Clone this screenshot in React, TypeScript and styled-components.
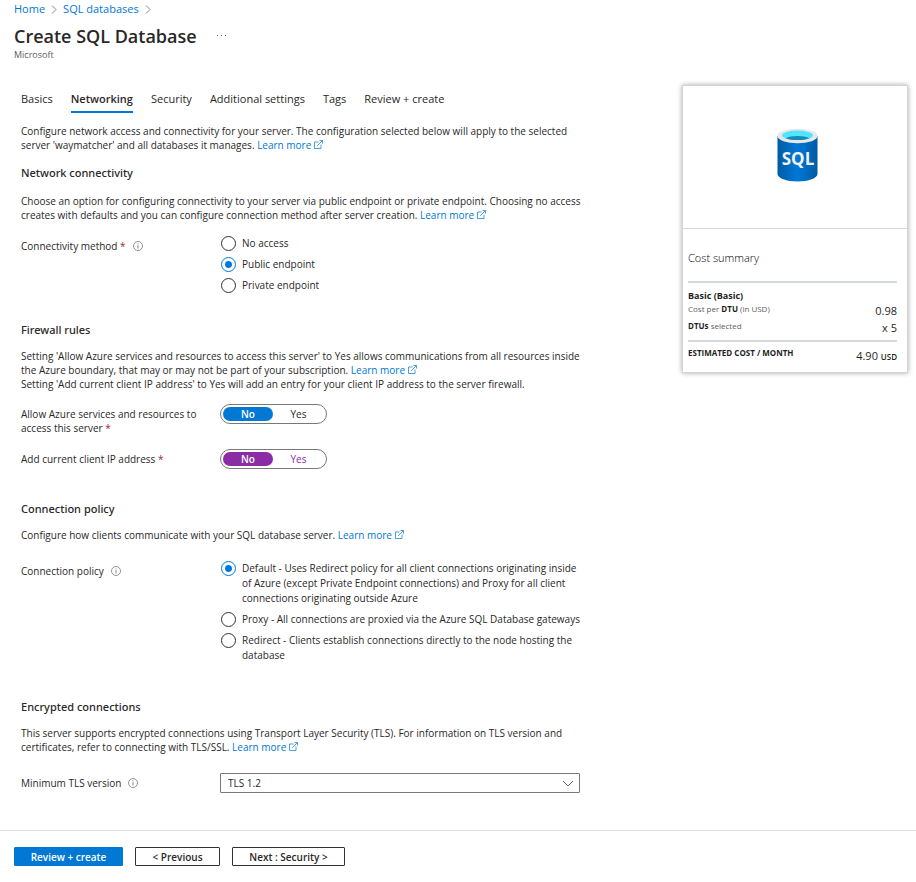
import React, { useState } from "react";
import styled, { createGlobalStyle, css } from "styled-components";

const BLUE = "#0078d4";
const TEXT = "#292827";

const GlobalStyle = createGlobalStyle`
  *, *::before, *::after { box-sizing: border-box; }
  body {
    margin: 0;
    background: #fff;
    color: ${TEXT};
    font-family: "Open Sans", "Noto Sans", sans-serif;
    font-size: 10px;
    line-height: 14px;
  }
  button, select, input { font: inherit; color: inherit; }
`;

const Page = styled.div`
  display: flex;
  flex-direction: column;
`;

const Header = styled.header`
  padding: 1px 14px 0;
`;

const Breadcrumb = styled.nav`
  display: flex;
  align-items: center;
  gap: 6px;
  height: 16px;
  font-size: 11px;
`;

const Link = styled.a`
  color: ${BLUE};
  text-decoration: none;
  white-space: nowrap;
`;

const TitleRow = styled.div`
  display: flex;
  align-items: center;
  gap: 20px;
  height: 24px;
  margin-top: 7px;
`;

const Title = styled.h1`
  margin: 0;
  font-size: 18px;
  line-height: 24px;
  font-weight: 600;
`;

const MoreButton = styled.button`
  display: flex;
  padding: 0;
  border: 0;
  background: none;
`;

const Publisher = styled.div`
  font-size: 9px;
  color: #605e5c;
`;

const Content = styled.main`
  display: flex;
  align-items: flex-start;
  justify-content: space-between;
  gap: 32px;
  padding: 22px 8px 37px 21px;
`;

const Form = styled.form`
  flex: 0 1 580px;
  padding-top: 8px;
`;

const Tabs = styled.div`
  display: flex;
  gap: 18px;
  margin-bottom: 11px;
`;

const Tab = styled.button<{ $active?: boolean }>`
  height: 21px;
  padding: 0 0 6px;
  border: 0;
  border-bottom: 2px solid ${(p) => (p.$active ? BLUE : "transparent")};
  background: none;
  font-size: 11px;
  line-height: 14px;
  white-space: nowrap;
  font-weight: ${(p) => (p.$active ? 600 : 400)};
`;

const Section = styled.section<{ $top?: number }>`
  margin-top: ${(p) => p.$top ?? 0}px;
`;

const Heading = styled.h2<{ $gap?: number }>`
  margin: 0 0 ${(p) => p.$gap ?? 11}px;
  font-family: "Noto Sans", sans-serif;
  font-size: 11px;
  line-height: 16px;
  font-weight: 500;
`;

const Paragraph = styled.p`
  margin: 0;
  white-space: nowrap;
`;

const Intro = styled(Paragraph)`
  margin-bottom: 13px;
`;

const Field = styled.div<{ $top: number }>`
  display: grid;
  grid-template-columns: 199px 360px;
  margin-top: ${(p) => p.$top}px;
`;

const FieldLabel = styled.label`
  padding-top: 3px;
  padding-right: 20px;
`;

const Required = styled.span`
  color: #a4262c;
`;

const InfoSvg = styled.svg`
  display: inline-block;
  margin-left: 7px;
  vertical-align: -1px;
`;

const LinkSvg = styled.svg`
  margin-left: 3px;
  vertical-align: 0;
`;

const Options = styled.div`
  display: flex;
  flex-direction: column;
  gap: 6px;
`;

const Option = styled.label`
  display: flex;
  align-items: flex-start;
  gap: 6px;
  line-height: 15px;
  white-space: nowrap;
`;

const Radio = styled.input`
  appearance: none;
  flex: none;
  width: 15px;
  height: 15px;
  margin: 0 0 0 1px;
  border: 1px solid #323130;
  border-radius: 50%;
  background: #fff;
  &:checked {
    border-color: ${BLUE};
    background: radial-gradient(circle, ${BLUE} 3px, #fff 4px);
  }
`;

const Switch = styled.div`
  display: grid;
  grid-template-columns: 50px 1fr;
  width: 107px;
  height: 20px;
  padding: 2px;
  border: 1px solid #7a7876;
  border-radius: 10px;
`;

const SwitchButton = styled.button<{ $tone: string; $on: boolean }>`
  padding: 0;
  border: 0;
  border-radius: 8px;
  background: none;
  line-height: 14px;
  color: ${(p) => (p.$tone === BLUE ? TEXT : p.$tone)};
  ${(p) =>
    p.$on &&
    css`
      background: ${p.$tone};
      color: #fff;
      font-weight: 600;
    `}
`;

const SelectBox = styled.div`
  display: grid;
  align-items: center;
  & > * {
    grid-area: 1 / 1;
  }
  & > svg {
    justify-self: end;
    margin-right: 6px;
    pointer-events: none;
  }
`;

const Select = styled.select`
  appearance: none;
  width: 100%;
  height: 20px;
  padding: 0 7px;
  border: 1px solid #7a7876;
  border-radius: 1px;
  background: #fff;
`;

const Card = styled.aside`
  flex: 0 0 226px;
  margin-top: 1px;
  border: 1px solid #d2d4d6;
  box-shadow: 0 0 5px rgba(0, 0, 0, 0.35);
  color: #1f1f1f;
`;

const CardLogo = styled.div`
  display: flex;
  justify-content: center;
  padding: 42px 0 46px 4px;
  border-bottom: 1px solid #d6d9dc;
`;

const CardBody = styled.div`
  padding: 20px 10px 4px 5px;
`;

const CardTitle = styled.h2`
  margin: 0 0 14px;
  font-size: 11px;
  line-height: 18px;
  font-weight: 300;
  color: #000;
`;

const CostBlock = styled.div`
  border-top: 2px solid #d6dade;
  padding: 6px 0 3px;
`;

const CostRow = styled.div`
  display: flex;
  justify-content: space-between;
  align-items: flex-start;
  height: 17px;
  font-size: 8px;
  line-height: 12px;
  color: #605e5c;
  & b {
    font-weight: 700;
    color: #1f1f1f;
  }
`;

const TotalRow = styled(CostRow)`
  line-height: 10px;
`;

const Plan = styled.div`
  font-size: 9px;
  line-height: 14px;
  font-weight: 700;
`;

const Amount = styled.span`
  font-size: 11px;
  line-height: 16px;
  color: #1f1f1f;
`;

const Currency = styled.span`
  font-size: 8px;
  font-weight: 600;
`;

const Footer = styled.footer`
  display: flex;
  gap: 12px;
  padding: 16px 14px;
  border-top: 1px solid #dcdcdc;
`;

const Button = styled.button<{ $primary?: boolean; $width: number }>`
  min-width: ${(p) => p.$width}px;
  height: 19px;
  padding: 0 8px;
  border: 1px solid ${(p) => (p.$primary ? BLUE : "#323130")};
  border-radius: 1px;
  background: ${(p) => (p.$primary ? BLUE : "#fff")};
  color: ${(p) => (p.$primary ? "#fff" : TEXT)};
  font-weight: 600;
  line-height: 14px;
  white-space: nowrap;
`;

const Crumb = () => (
  <svg width="6" height="9" viewBox="0 0 6 9" fill="none" stroke="#8a8886" aria-hidden="true">
    <path d="M1 .5 5 4.5 1 8.5" />
  </svg>
);

const Info = () => (
  <InfoSvg width="10" height="10" viewBox="0 0 10 10" fill="none" stroke="#7a7876" aria-hidden="true">
    <circle cx="5" cy="5" r="4.5" strokeWidth=".8" />
    <path d="M5 4.2V7.5M5 2.4V3.3" strokeWidth=".9" />
  </InfoSvg>
);

const LearnMore = () => (
  <Link href="#">
    Learn more
    <LinkSvg width="9" height="9" viewBox="0 0 9 9" fill="none" stroke={BLUE} strokeWidth=".7" aria-hidden="true">
      <path d="M4.5 2H.5V8.5H7V4.5M3.2 5.8 8.3.7M5.5.5H8.5V3.5" />
    </LinkSvg>
  </Link>
);

const SqlLogo = () => (
  <svg width="41" height="54" viewBox="0 0 41 54" role="img" aria-label="SQL database">
    <defs>
      <linearGradient id="body" x1="0" x2="1" y1="0" y2="0">
        <stop offset="0" stopColor="#005ba1" />
        <stop offset=".2" stopColor="#0067b8" />
        <stop offset=".5" stopColor="#0078d7" />
        <stop offset=".8" stopColor="#0067b8" />
        <stop offset="1" stopColor="#005ba1" />
      </linearGradient>
    </defs>
    <path d="M.5 8V46C.5 50 9.5 53.5 20.5 53.5S40.5 50 40.5 46V8Z" fill="url(#body)" />
    <ellipse cx="20.5" cy="8" rx="20" ry="7.3" fill="#e8e8e8" />
    <ellipse cx="20.5" cy="7.3" rx="15.5" ry="4.8" fill="#50e6ff" />
    <path d="M8.5 10.2C11.5 8.6 15.5 7.9 20.5 7.9S29.5 8.6 32.5 10.2C29.5 11.5 25.5 12.1 20.5 12.1S11.5 11.5 8.5 10.2Z" fill="#198ab3" />
    <text x="21" y="37" textAnchor="middle" fontFamily="Open Sans, sans-serif" fontSize="17" fontWeight="700" fill="#f2f2f2">
      SQL
    </text>
  </svg>
);

const TAB_NAMES = ["Basics", "Networking", "Security", "Additional settings", "Tags", "Review + create"];

function Toggle({ tone, label }: { tone: string; label: string }) {
  const [yes, setYes] = useState(false);
  return (
    <Switch role="group" aria-label={label}>
      <SwitchButton type="button" $tone={tone} $on={!yes} aria-pressed={!yes} onClick={() => setYes(false)}>
        No
      </SwitchButton>
      <SwitchButton type="button" $tone={tone} $on={yes} aria-pressed={yes} onClick={() => setYes(true)}>
        Yes
      </SwitchButton>
    </Switch>
  );
}

export default function App() {
  return (
    <Page>
      <GlobalStyle />
      <Header>
        <Breadcrumb aria-label="Breadcrumb">
          <Link href="#">Home</Link>
          <Crumb />
          <Link href="#">SQL databases</Link>
          <Crumb />
        </Breadcrumb>
        <TitleRow>
          <Title>Create SQL Database</Title>
          <MoreButton aria-label="More actions">
            <svg width="10" height="2" viewBox="0 0 10 2" fill="#605e5c">
              <path d="M0 0h1v1H0zM4 0h1v1H4zM8 0h1v1H8z" />
            </svg>
          </MoreButton>
        </TitleRow>
        <Publisher>Microsoft</Publisher>
      </Header>

      <Content>
        <Form>
          <Tabs role="tablist">
            {TAB_NAMES.map((name) => (
              <Tab key={name} type="button" role="tab" aria-selected={name === "Networking"} $active={name === "Networking"}>
                {name}
              </Tab>
            ))}
          </Tabs>

          <Intro>
            Configure network access and connectivity for your server. The configuration selected below will apply to the selected
            <br />
            server 'waymatcher' and all databases it manages. <LearnMore />
          </Intro>

          <Section>
            <Heading $gap={13}>Network connectivity</Heading>
            <Paragraph>
              Choose an option for configuring connectivity to your server via public endpoint or private endpoint. Choosing no access
              <br />
              creates with defaults and you can configure connection method after server creation. <LearnMore />
            </Paragraph>
            <Field $top={14}>
              <FieldLabel as="div" id="method">
                Connectivity method <Required>*</Required>
                <Info />
              </FieldLabel>
              <Options role="radiogroup" aria-labelledby="method">
                <Option>
                  <Radio type="radio" name="method" />
                  No access
                </Option>
                <Option>
                  <Radio type="radio" name="method" defaultChecked />
                  Public endpoint
                </Option>
                <Option>
                  <Radio type="radio" name="method" />
                  Private endpoint
                </Option>
              </Options>
            </Field>
          </Section>

          <Section $top={29}>
            <Heading>Firewall rules</Heading>
            <Paragraph>
              Setting 'Allow Azure services and resources to access this server' to Yes allows communications from all resources inside
              <br />
              the Azure boundary, that may or may not be part of your subscription. <LearnMore />
              <br />
              Setting 'Add current client IP address' to Yes will add an entry for your client IP address to the server firewall.
            </Paragraph>
            <Field $top={13}>
              <FieldLabel as="div">
                Allow Azure services and resources to access this server <Required>*</Required>
              </FieldLabel>
              <Toggle tone={BLUE} label="Allow Azure services and resources to access this server" />
            </Field>
            <Field $top={14}>
              <FieldLabel as="div">
                Add current client IP address <Required>*</Required>
              </FieldLabel>
              <Toggle tone="#8a2da5" label="Add current client IP address" />
            </Field>
          </Section>

          <Section $top={32}>
            <Heading>Connection policy</Heading>
            <Paragraph>
              Configure how clients communicate with your SQL database server. <LearnMore />
            </Paragraph>
            <Field $top={19}>
              <FieldLabel as="div" id="policy">
                Connection policy
                <Info />
              </FieldLabel>
              <Options role="radiogroup" aria-labelledby="policy">
                <Option>
                  <Radio type="radio" name="policy" defaultChecked />
                  <span>
                    Default - Uses Redirect policy for all client connections originating inside
                    <br />
                    of Azure (except Private Endpoint connections) and Proxy for all client
                    <br />
                    connections originating outside Azure
                  </span>
                </Option>
                <Option>
                  <Radio type="radio" name="policy" />
                  Proxy - All connections are proxied via the Azure SQL Database gateways
                </Option>
                <Option>
                  <Radio type="radio" name="policy" />
                  <span>
                    Redirect - Clients establish connections directly to the node hosting the
                    <br />
                    database
                  </span>
                </Option>
              </Options>
            </Field>
          </Section>

          <Section $top={36}>
            <Heading>Encrypted connections</Heading>
            <Paragraph>
              This server supports encrypted connections using Transport Layer Security (TLS). For information on TLS version and
              <br />
              certificates, refer to connecting with TLS/SSL. <LearnMore />
            </Paragraph>
            <Field $top={19}>
              <FieldLabel htmlFor="tls">
                Minimum TLS version
                <Info />
              </FieldLabel>
              <SelectBox>
                <Select id="tls" defaultValue="1.2">
                  <option value="1.0">TLS 1.0</option>
                  <option value="1.1">TLS 1.1</option>
                  <option value="1.2">TLS 1.2</option>
                </Select>
                <svg width="12" height="7" viewBox="0 0 12 7" fill="none" stroke="#605e5c" aria-hidden="true">
                  <path d="M1 1 6 6 11 1" />
                </svg>
              </SelectBox>
            </Field>
          </Section>
        </Form>

        <Card>
          <CardLogo>
            <SqlLogo />
          </CardLogo>
          <CardBody>
            <CardTitle>Cost summary</CardTitle>
            <CostBlock>
              <Plan>Basic (Basic)</Plan>
              <CostRow>
                <span>
                  Cost per <b>DTU</b> (in USD)
                </span>
                <Amount>0.98</Amount>
              </CostRow>
              <CostRow>
                <span>
                  <b>DTUs</b> selected
                </span>
                <Amount>x 5</Amount>
              </CostRow>
            </CostBlock>
            <CostBlock>
              <TotalRow>
                <b>ESTIMATED COST / MONTH</b>
                <Amount>
                  4.90 <Currency>USD</Currency>
                </Amount>
              </TotalRow>
            </CostBlock>
          </CardBody>
        </Card>
      </Content>

      <Footer>
        <Button $primary $width={109}>
          Review + create
        </Button>
        <Button $width={85}>&lt; Previous</Button>
        <Button $width={113}>Next : Security &gt;</Button>
      </Footer>
    </Page>
  );
}
